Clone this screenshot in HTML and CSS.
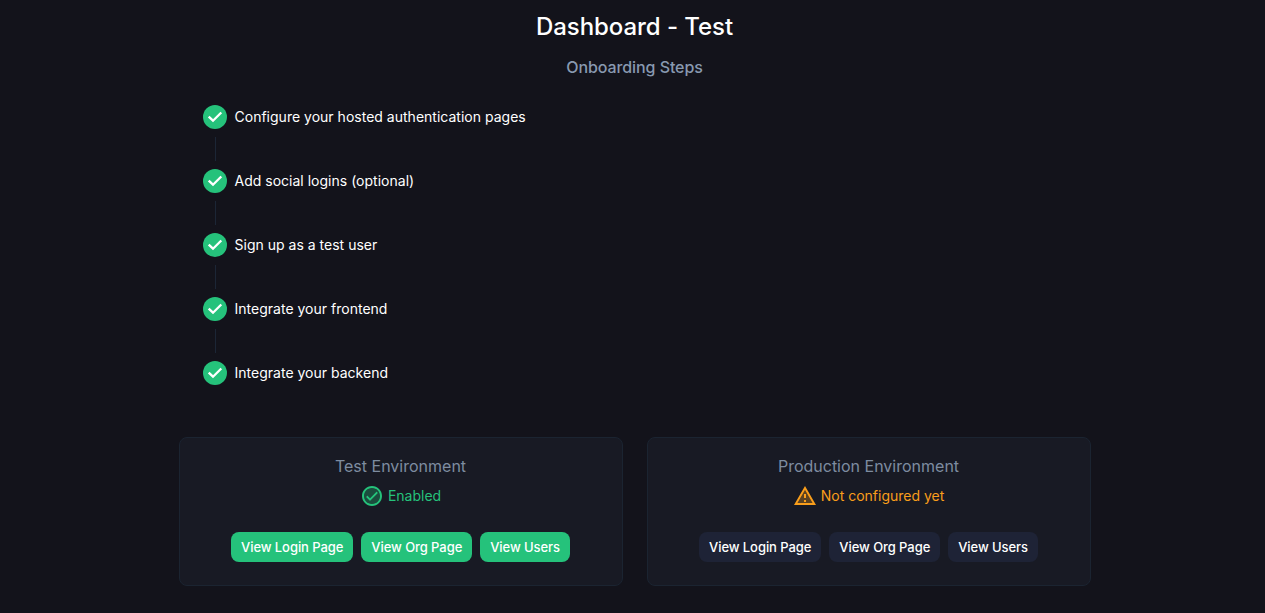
FILE: index.html
```html
<!DOCTYPE html>
<html lang="en">
<head>
<meta charset="utf-8">
<title>Dashboard - Test</title>
<link rel="stylesheet" href="styles.css">
</head>
<body>
<svg class="defs" width="0" height="0" aria-hidden="true">
  <symbol id="step-done" viewBox="0 0 24 24"><circle cx="12" cy="12" r="12" fill="#25c27b"/><path d="M5.700 11.600 10 15.700 18.300 7.500" fill="none" stroke="#fff" stroke-width="2.300"/></symbol>
</svg>
<main class="page">
  <h1 class="title">Dashboard - Test</h1>
  <h2 class="subtitle">Onboarding Steps</h2>
  <ol class="steps">
    <li class="step"><svg class="step-icon"><use href="#step-done"/></svg><span>Configure your hosted authentication pages</span></li>
    <li class="connector"></li>
    <li class="step"><svg class="step-icon"><use href="#step-done"/></svg><span>Add social logins (optional)</span></li>
    <li class="connector"></li>
    <li class="step"><svg class="step-icon"><use href="#step-done"/></svg><span>Sign up as a test user</span></li>
    <li class="connector"></li>
    <li class="step"><svg class="step-icon"><use href="#step-done"/></svg><span>Integrate your frontend</span></li>
    <li class="connector"></li>
    <li class="step"><svg class="step-icon"><use href="#step-done"/></svg><span>Integrate your backend</span></li>
  </ol>
  <div class="cards">
    <section class="card">
      <h3 class="card-title">Test Environment</h3>
      <p class="status enabled">
        <svg class="status-icon" viewBox="0 0 24 24" fill="currentColor"><path opacity=".3" d="M12 4c-4.410 0-8 3.590-8 8s3.590 8 8 8 8-3.590 8-8-3.590-8-8-8zm-2 13-4-4 1.410-1.410L10 14.170l6.590-6.590L18 9l-8 8z"/><path d="M12 2C6.480 2 2 6.480 2 12s4.480 10 10 10 10-4.480 10-10S17.520 2 12 2zm0 18c-4.410 0-8-3.590-8-8s3.590-8 8-8 8 3.590 8 8-3.590 8-8 8zm4.590-12.420L10 14.170l-2.590-2.580L6 13l4 4 8-8z"/></svg>
        <span>Enabled</span>
      </p>
      <div class="actions">
        <button class="button primary">View Login Page</button>
        <button class="button primary">View Org Page</button>
        <button class="button primary">View Users</button>
      </div>
    </section>
    <section class="card">
      <h3 class="card-title">Production Environment</h3>
      <p class="status warning">
        <svg class="status-icon" viewBox="0 0 24 24" fill="currentColor"><path opacity=".3" d="M4.470 19h15.060L12 5.990 4.470 19zM13 18h-2v-2h2v2zm0-4h-2v-4h2v4z"/><path d="M1 21h22L12 2 1 21zm3.470-2L12 5.990 19.530 19H4.470zM11 16h2v2h-2zm0-6h2v4h-2z"/></svg>
        <span>Not configured yet</span>
      </p>
      <div class="actions">
        <button class="button secondary">View Login Page</button>
        <button class="button secondary">View Org Page</button>
        <button class="button secondary">View Users</button>
      </div>
    </section>
  </div>
</main>
</body>
</html>
```
FILE: styles.css
```css
* { box-sizing: border-box; }
body {
  margin: 0;
  height: 613px;
  overflow: hidden;
  background: #13131b;
  color: #fff;
  font-family: Inter, "Liberation Sans", sans-serif;
}
h1, h2, h3, p, ol { margin: 0; padding: 0; font-weight: 400; }
.defs { position: absolute; }
.page { width: 912px; margin-left: 179px; padding-top: 11px; }
.title { padding-right: 1px; font-size: 24px; line-height: 32px; font-weight: 500; letter-spacing: -0.06px; text-align: center; }
.subtitle {
  margin-top: 12px;
  padding-right: 1px;
  font-size: 16px;
  line-height: 24px;
  font-weight: 500;
  letter-spacing: -0.08px;
  text-align: center;
  color: #8899b0;
}
.steps { list-style: none; margin-top: 18px; padding-left: 24px; }
.step {
  display: flex;
  align-items: center;
  gap: 7.5px;
  height: 40px;
  font-size: 14px;
  line-height: 20px;
  letter-spacing: 0.01px;
}
.step-icon { width: 24px; height: 24px; }
.connector { height: 24px; margin-left: 12px; border-left: 1px solid #1c2636; }
.cards { display: flex; gap: 24px; margin-top: 44px; }
.card {
  width: 444px;
  height: 149px;
  padding-top: 16px;
  border: 1px solid #1b2431;
  border-radius: 8px;
  background: #181a24;
  text-align: center;
}
.card-title { padding-right: 1px; font-size: 16px; line-height: 24px; color: #7e8ca0; }
.status {
  display: flex;
  justify-content: center;
  align-items: center;
  gap: 4px;
  height: 24px;
  margin-top: 6px;
  padding-right: 1px;
  font-size: 14px;
  line-height: 18px;
}
.status span { padding-bottom: 1px; }
.status-icon { width: 24px; height: 24px; }
.enabled { color: #25c27b; }
.warning { color: #f99e1b; }
.actions { display: flex; justify-content: center; gap: 8px; margin-top: 24px; padding-right: 1px; }
.button {
  height: 30px;
  padding: 0 10px;
  border: 0;
  border-radius: 8px;
  font: 500 13px/22px Inter, "Liberation Sans", sans-serif;
  letter-spacing: -0.07px;
  color: #fff;
}
.primary { background: #25c27b; }
.secondary { background: #1e2336; }
```
